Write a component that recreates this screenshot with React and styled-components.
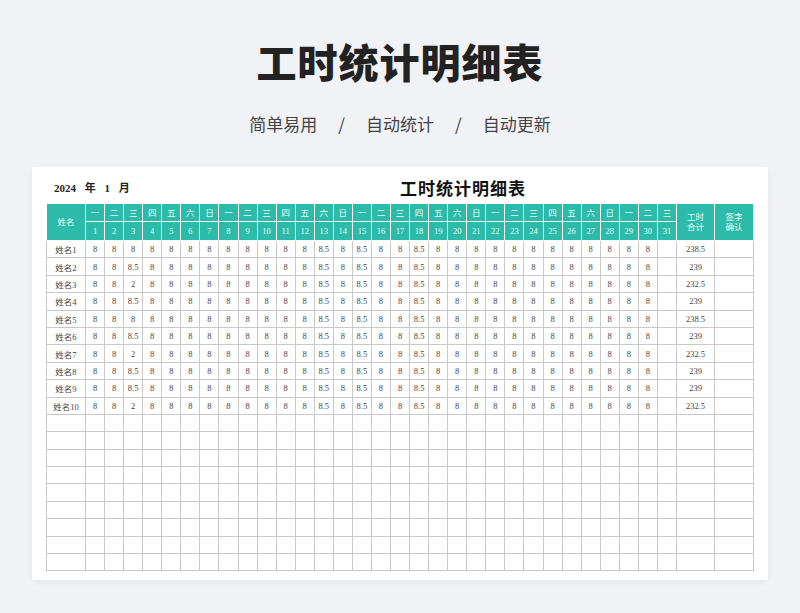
import React from "react";
import styled, { createGlobalStyle } from "styled-components";

const G = createGlobalStyle`
  body{margin:0;background:#f0f2f5;font-family:"Noto Sans CJK SC",sans-serif;}
`;
const Page = styled.div`width:800px;height:613px;display:flex;flex-direction:column;align-items:center;overflow:hidden;`;
const Title = styled.h1`margin:36px 0 0;font-size:40px;font-weight:900;color:#222;letter-spacing:1px;line-height:50px;`;
const Sub = styled.div`margin-top:26px;font-size:17px;color:#444;display:flex;gap:21px;line-height:24px;`;
const Card = styled.div`margin-top:31px;width:736px;height:413px;background:#fff;box-shadow:0 2px 8px rgba(0,0,0,.06);padding:0 14px;box-sizing:border-box;`;
const Top = styled.div`height:36px;display:flex;align-items:center;position:relative;`;
const YM = styled.div`font-family:"Liberation Serif","Noto Sans CJK SC",serif;font-size:11px;font-weight:bold;color:#222;margin-left:8px;word-spacing:6px;margin-top:4px;`;
const Inner = styled.div`position:absolute;left:354px;top:8px;font-size:17px;font-weight:bold;color:#111;letter-spacing:1px;`;
const Table = styled.table`border-collapse:collapse;width:708px;table-layout:fixed;font-family:"Liberation Serif","Noto Sans CJK SC",serif;font-size:8.5px;color:#444;`;
const Th = styled.th`background:#2dbba9;color:#e8fffb;font-weight:normal;border:1px solid #fff;height:${p=>p.h||17}px;padding:0;text-align:center;line-height:10px;`;
const Td = styled.td`border:1px solid #c9c9c9;height:16.4px;padding:0;text-align:center;color:#444;`;

const wk = ["一","二","三","四","五","六","日"];
const c3 = ["8","8.5","2","8.5","8","8.5","2","8.5","8.5","2"];
const tot = ["238.5","239","232.5","239","238.5","239","232.5","239","239","232.5"];

export default function App(){
  const days = Array.from({length:31},(_,i)=>i+1);
  return <Page><G/>
    <Title>工时统计明细表</Title>
    <Sub><span>简单易用</span><span>/</span><span>自动统计</span><span>/</span><span>自动更新</span></Sub>
    <Card>
      <Top><YM>2024 年 1 月</YM><Inner>工时统计明细表</Inner></Top>
      <Table>
        <colgroup><col style={{width:39}}/>{days.map(d=><col key={d}/>)}<col style={{width:38}}/><col style={{width:39}}/></colgroup>
        <thead>
          <tr><Th rowSpan={2}>姓名</Th>{days.map(d=><Th key={d}>{wk[(d-1)%7]}</Th>)}<Th rowSpan={2}>工时<br/>合计</Th><Th rowSpan={2}>签字<br/>确认</Th></tr>
          <tr>{days.map(d=><Th key={d} h={18}>{d}</Th>)}</tr>
        </thead>
        <tbody>
          {Array.from({length:19},(_,r)=><tr key={r}>
            <Td>{r<10?"姓名"+(r+1):""}</Td>
            {days.map(d=><Td key={d}>{r<10&&d<31?(d===3?c3[r]:[13,15,18].includes(d)?"8.5":"8"):""}</Td>)}
            <Td>{r<10?tot[r]:""}</Td><Td/>
          </tr>)}
        </tbody>
      </Table>
    </Card>
  </Page>;
}
